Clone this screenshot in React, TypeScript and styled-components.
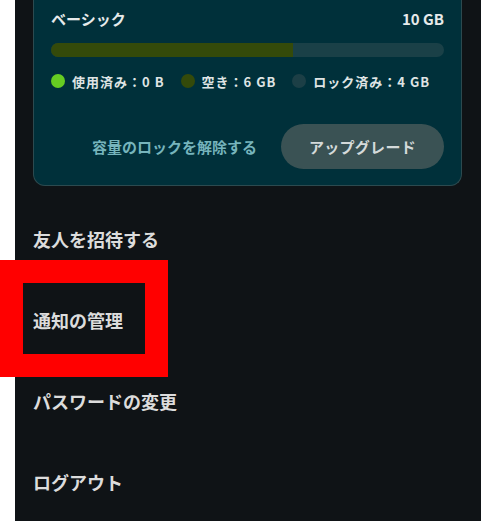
import { FC } from 'react';
import styled, { createGlobalStyle } from 'styled-components';

const GlobalStyle = createGlobalStyle`
  html, body {
    margin: 0;
    padding: 0;
    background: #ffffff;
  }
  body {
    font-family: 'Noto Sans CJK JP', 'Noto Sans', sans-serif;
  }
`;

const legend = [
  { color: '#66cc22', label: '使用済み：', value: '0 B' },
  { color: '#344a0a', label: '空き：', value: '6 GB' },
  { color: '#1c3f46', label: 'ロック済み：', value: '4 GB' },
];

const menu = ['友人を招待する', '通知の管理', 'パスワードの変更', 'ログアウト'];

const App: FC = () => {
  return (
    <Root>
      <GlobalStyle />
      <Panel>
        <Card>
          <TitleRow>
            <PlanName>ベーシック</PlanName>
            <PlanSize>10 GB</PlanSize>
          </TitleRow>
          <Track>
            <Fill style={{ width: '61.6%' }} />
          </Track>
          <Legend>
            {legend.map((item) => (
              <LegendItem key={item.label}>
                <Dot $color={item.color} />
                <LegendText>
                  {item.label}
                  {item.value}
                </LegendText>
              </LegendItem>
            ))}
          </Legend>
          <Actions>
            <LinkButton>容量のロックを解除する</LinkButton>
            <PillButton>アップグレード</PillButton>
          </Actions>
        </Card>
        <Menu>
          {menu.map((label, i) => (
            <MenuItem key={label}>
              {i === 1 && <Highlight />}
              {label}
            </MenuItem>
          ))}
        </Menu>
      </Panel>
    </Root>
  );
};

export default App;

const Root = styled.div`
  display: flex;
  min-height: 521px;
  padding-left: 15px;
`;
const Panel = styled.div`
  flex: 1;
  background: #0f1316;
  padding: 0 19px 0 18px;
`;
const Card = styled.div`
  background: #00303a;
  border: 1px solid #2c4a4f;
  border-top: none;
  border-radius: 0 0 12px 12px;
  padding: 8px 17px 16px;
`;
const TitleRow = styled.div`
  display: flex;
  justify-content: space-between;
  align-items: center;
  height: 20px;
`;
const PlanName = styled.div`
  color: #e6eaea;
  font-size: 15px;
  font-weight: 700;
`;
const PlanSize = styled.div`
  color: #e6eaea;
  font-size: 15px;
  font-weight: 700;
`;
const Track = styled.div`
  margin-top: 15px;
  height: 14px;
  border-radius: 7px;
  background: #1a4047;
  overflow: hidden;
`;
const Fill = styled.div`
  height: 100%;
  background: #344a0a;
`;
const Legend = styled.div`
  display: flex;
  align-items: center;
  gap: 16px;
  margin-top: 17px;
  height: 14px;
`;
const LegendItem = styled.div`
  display: flex;
  align-items: center;
  gap: 7px;
`;
const Dot = styled.span<{ $color: string }>`
  width: 14px;
  height: 14px;
  border-radius: 50%;
  background: ${(p) => p.$color};
`;
const LegendText = styled.span`
  color: #dfe4e4;
  font-size: 13px;
  font-weight: 700;
  letter-spacing: 1px;
  white-space: nowrap;
`;
const Actions = styled.div`
  display: flex;
  justify-content: flex-end;
  align-items: center;
  gap: 24px;
  margin-top: 36px;
`;
const LinkButton = styled.button`
  border: none;
  background: none;
  padding: 0;
  font-family: inherit;
  color: #76b4bc;
  font-size: 15px;
  font-weight: 700;
`;
const PillButton = styled.button`
  border: none;
  height: 45px;
  padding: 0 28px;
  border-radius: 23px;
  background: #3a5254;
  font-family: inherit;
  color: #d4dada;
  font-size: 15px;
  font-weight: 700;
  letter-spacing: 0.3px;
`;
const Menu = styled.div`
  margin-top: 12px;
`;
const MenuItem = styled.div`
  position: relative;
  display: flex;
  align-items: center;
  height: 81px;
  color: #dcdcdc;
  font-size: 18px;
  font-weight: 700;
`;
const Highlight = styled.span`
  position: absolute;
  left: -33px;
  top: -19px;
  width: 168px;
  height: 117px;
  box-sizing: border-box;
  border: 23px solid #ff0000;
`;
